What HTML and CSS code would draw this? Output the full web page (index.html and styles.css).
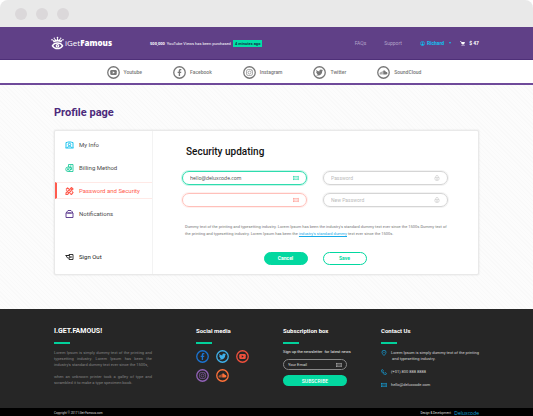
FILE: index.html
```html
<!DOCTYPE html>
<html lang="en">
<head>
<meta charset="utf-8">
<meta name="viewport" content="width=device-width, initial-scale=1">
<title>iGetFamous - Profile page</title>
<link rel="stylesheet" href="styles.css">
</head>
<body>
<svg class="sprite" aria-hidden="true">
  <symbol id="youtube" viewBox="0 0 26 26"><circle cx="13" cy="13" r="11.5" fill="none" stroke="currentColor" stroke-width="2.6"/><rect x="6.5" y="8" width="13" height="10" rx="2.5" fill="currentColor"/><path d="M11.5 10.5v5l4-2.5z" fill="var(--hole)"/></symbol>
  <symbol id="facebook" viewBox="0 0 26 26"><circle cx="13" cy="13" r="11.5" fill="none" stroke="currentColor" stroke-width="2.6"/><path d="M11.5 20v-6H9.300v-2.600h2.200V9.500c0-2.300 1.300-3.500 3.300-3.500h1.900v2.500h-1.300c-.9 0-1.200.5-1.200 1.200v1.700h2.500l-.4 2.600h-2.100v6z" fill="currentColor"/></symbol>
  <symbol id="instagram" viewBox="0 0 26 26"><circle cx="13" cy="13" r="11.500" fill="none" stroke="currentColor" stroke-width="2.6"/><g fill="none" stroke="currentColor" stroke-width="1.200"><rect x="7" y="7" width="12" height="12" rx="3.500"/><circle cx="13" cy="13" r="3"/></g><circle cx="16.500" cy="9.500" r=".9" fill="currentColor"/></symbol>
  <symbol id="twitter" viewBox="0 0 26 26"><circle cx="13" cy="13" r="11.5" fill="none" stroke="currentColor" stroke-width="2.6"/><path d="M20 8.800l-1.600 1.700c.2 4.800-3.400 8.700-8 8.700-1.700 0-3.200-.4-4.400-1.200 1.500.1 2.900-.3 4-1.200-1.300-.1-2.200-.9-2.600-2h1.200c-1.400-.5-2.200-1.600-2.200-3l1.300.3C6.400 11.100 6.100 9.500 6.900 8c1.500 1.800 3.500 2.800 5.900 3-.4-2.300 1-3.900 2.900-3.900.8 0 1.500.3 2.100.9l1.800-.7-1.100 1.600z" fill="currentColor"/></symbol>
  <symbol id="soundcloud" viewBox="0 0 26 26"><circle cx="13" cy="13" r="11.5" fill="none" stroke="currentColor" stroke-width="2.6"/><path d="M5.500 13.500h1V17h-1zM7.200 12.200h1V17h-1zM9 11.500h1V17H9zM10.700 10.500h1V17h-1zM12.400 9.500c2.500-1.400 5 .1 5.400 2.700 1.700-.4 3 .8 3 2.400 0 1.500-1 2.400-2.400 2.400h-6z" fill="currentColor"/></symbol>
  <symbol id="mail" viewBox="0 0 14 10"><rect x="1" y="1" width="12" height="8" fill="none" stroke="currentColor" stroke-width="1.400"/><path d="M1 1l6 5 6-5M1 9l4-4M13 9L9 5" fill="none" stroke="currentColor" stroke-width="1.200"/></symbol>
  <symbol id="lock" viewBox="0 0 14 14"><path d="M4 6V4a3 3 0 016 0v2M2 6h10v3a5 4 0 01-10 0zM7 8v3M5 9.500h4" fill="none" stroke="currentColor" stroke-width="1.300"/></symbol>
</svg>

<div class="window">
  <div class="chrome"><span></span><span></span><span></span></div>

  <header class="top wrap">
    <a class="logo" href="#">
      <svg viewBox="0 0 28 30" aria-hidden="true"><path d="M6 13L2 6l6 3-1-6 5 5 2-7 2 7 5-5-1 6 6-3-4 7c-5-3-11-3-16 0z" fill="#fff"/><g fill="#fff"><circle cx="14" cy="2" r="1.800"/><circle cx="7" cy="3.500" r="1.500"/><circle cx="21" cy="3.500" r="1.500"/><circle cx="2" cy="7" r="1.500"/><circle cx="26" cy="7" r="1.500"/></g><path d="M3 20c5-8 17-8 22 0-5 8-17 8-22 0z" fill="#604087" stroke="#fff" stroke-width="3"/><circle cx="14" cy="20" r="4" fill="#fff"/><circle cx="14" cy="20" r="1.500" fill="#604087"/></svg>
      <span>iGet<b>Famous</b></span>
    </a>
    <p class="ticker"><span><b>500,000</b>&nbsp; YouTube Views has been purchased</span><mark>4 minutes ago</mark></p>
    <nav class="account" aria-label="Account">
      <a href="#">FAQs</a>
      <a href="#">Support</a>
      <a class="user" href="#"><svg viewBox="0 0 12 12" aria-hidden="true"><circle cx="6" cy="6" r="5" fill="none" stroke="currentColor" stroke-width="1.500"/><circle cx="6" cy="4.500" r="1.800" fill="currentColor"/><path d="M3 9c1-3 5-3 6 0-2 2-4 2-6 0z" fill="currentColor"/></svg>Richard<i class="caret"></i></a>
      <a class="cart" href="#"><svg viewBox="0 0 12 12" aria-hidden="true"><path d="M0 1h2.500L5 7.500h5" fill="none" stroke="currentColor" stroke-width="1.500"/><path d="M3 2.500h9L10 7H4.500z" fill="currentColor"/><circle cx="5" cy="10" r="1.300" fill="currentColor"/><circle cx="9.500" cy="10" r="1.300" fill="currentColor"/></svg>$ 47</a>
    </nav>
  </header>

  <nav class="networks" aria-label="Networks">
    <a href="#"><svg class="round"><use href="#youtube"/></svg>Youtube</a>
    <a href="#"><svg class="round"><use href="#facebook"/></svg>Facebook</a>
    <a href="#"><svg class="round"><use href="#instagram"/></svg>Instagram</a>
    <a href="#"><svg class="round"><use href="#twitter"/></svg>Twitter</a>
    <a href="#"><svg class="round"><use href="#soundcloud"/></svg>SoundCloud</a>
  </nav>

  <main class="wrap">
    <h1>Profile page</h1>
    <div class="card">
      <nav class="side" aria-label="Profile">
        <a href="#"><svg class="c-cyan" viewBox="0 0 18 16" aria-hidden="true"><g fill="none" stroke="currentColor" stroke-width="2"><path d="M2 14V3h3M13 3h3v11M5 2h8"/><circle cx="9" cy="7" r="2.500"/><path d="M4.500 14c0-5 9-5 9 0M1 14h16"/></g></svg>My Info</a>
        <a href="#"><svg class="c-green" viewBox="0 0 18 16" aria-hidden="true"><g fill="none" stroke="currentColor" stroke-width="1.700"><path d="M7 6V1h9v14H7"/><circle cx="6" cy="10.500" r="4.500"/><path d="M13 4h-3v3h3v4h-3M6 8v5M4 10.500h4"/></g></svg>Billing Method</a>
        <a class="active" href="#" aria-current="page"><svg viewBox="0 0 18 16" aria-hidden="true"><g fill="none" stroke="currentColor" stroke-width="2.200"><path d="M2 12L13 1l3 3L5 15H2zM5 9l3 3M8 6l3 3M11 3l3 3"/><path d="M2 5l3-3 3 2M10 13l3 2 3-4-2-2M2 5l2 2"/></g></svg>Password and Security</a>
        <a href="#"><svg class="c-purple" viewBox="0 0 18 16" aria-hidden="true"><path d="M2 6h14v9H2zM2 6l4-5h6l3 3v2M5 6h8" fill="none" stroke="currentColor" stroke-width="1.800" stroke-linejoin="round"/></svg>Notifications</a>
        <a class="out" href="#"><svg viewBox="0 0 18 16" aria-hidden="true"><path d="M8 5V3h8v10H8v-2M9 5H2l3 5h5zM1 5h8M12 6v4" fill="none" stroke="currentColor" stroke-width="1.800"/></svg>Sign Out</a>
      </nav>
      <section class="content">
        <h2>Security updating</h2>
        <form>
          <div class="fields">
            <label class="field ok"><input type="email" aria-label="Email" value="hello@deluxcode.com"><svg><use href="#mail"/></svg></label>
            <label class="field"><input type="password" aria-label="Password" placeholder="Password"><svg><use href="#lock"/></svg></label>
            <label class="field bad"><input type="email" aria-label="Confirm email"><svg><use href="#mail"/></svg></label>
            <label class="field"><input type="password" aria-label="New Password" placeholder="New Password"><svg><use href="#lock"/></svg></label>
          </div>
          <p class="note">Dummy text of the printing and typesetting industry. Lorem Ipsum has been the industry's standard dummy text ever since the 1500s.Dummy text of the printing and typesetting industry. Lorem Ipsum has been the <a href="#">industry's standard dummy</a> text ever since the 1500s.</p>
          <div class="actions"><button class="fill" type="button">Cancel</button><button type="submit">Save</button></div>
        </form>
      </section>
    </div>
  </main>

  <footer>
    <div class="columns wrap">
      <section class="about">
        <h3>I.GET.FAMOUS!</h3>
        <p>Lorem Ipsum is simply dummy text of the printing and typesetting industry. Lorem Ipsum has been the industry's standard dummy text ever since the 1500s,</p>
        <p>when an unknown printer took a galley of type and scrambled it to make a type specimen book.</p>
      </section>
      <section class="social">
        <h3>Social media</h3>
        <div class="icons">
          <a class="fb" href="#" aria-label="Facebook"><svg class="round"><use href="#facebook"/></svg></a>
          <a class="tw" href="#" aria-label="Twitter"><svg class="round"><use href="#twitter"/></svg></a>
          <a class="yt" href="#" aria-label="Youtube"><svg class="round"><use href="#youtube"/></svg></a>
          <a class="ig" href="#" aria-label="Instagram"><svg class="round"><use href="#instagram"/></svg></a>
          <a class="sc" href="#" aria-label="SoundCloud"><svg class="round"><use href="#soundcloud"/></svg></a>
        </div>
      </section>
      <form class="subscribe">
        <h3>Subscription box</h3>
        <label for="news">Sign up the newsletter &nbsp;for latest news</label>
        <div class="field"><input id="news" type="email" placeholder="Your Email"><svg><use href="#mail"/></svg></div>
        <button type="submit">SUBSCRIBE</button>
      </form>
      <section class="contact">
        <h3>Contact Us</h3>
        <ul>
          <li><svg viewBox="0 0 12 12" aria-hidden="true"><path d="M6 11C3 8 2 6 2 4.500a4 4 0 018 0C10 6 9 8 6 11z" fill="none" stroke="currentColor" stroke-width="1.500"/><circle cx="6" cy="4.500" r="1.200" fill="currentColor"/></svg><span>Lorem Ipsum is simply dummy text of the printing<br>&nbsp;and typesetting industry.</span></li>
          <li><svg viewBox="0 0 12 12" aria-hidden="true"><path d="M1 2l2-1 2 3-1.500 1.500 3 3L8 7l3 2-1 2C6 12 0 6 1 2z" fill="none" stroke="currentColor" stroke-width="1.400"/></svg><span>(+01) 800 888 8888</span></li>
          <li><svg><use href="#mail"/></svg><span>hello@deluxcode.com</span></li>
        </ul>
      </section>
    </div>
    <div class="legal wrap"><span>Copyright © 2017 I.Get-Famous.com</span><span class="credit">Design &amp; Development: <b>Deluxcode</b></span></div>
  </footer>
</div>
</body>
</html>
```
FILE: styles.css
```css
* { box-sizing: border-box; margin: 0; padding: 0; }
body { font: 5px/7px Roboto, "Liberation Sans", sans-serif; background: #fff; color: #555; }
a { color: inherit; text-decoration: none; }
ul { list-style: none; }
button, input { font: inherit; color: inherit; border: 0; background: none; outline: 0; }
button { cursor: pointer; }
svg { flex: none; }
.sprite { position: absolute; width: 0; height: 0; }
.wrap { padding-left: 54px; padding-right: 54px; }
.round { display: block; width: 13px; height: 13px; --hole: #fff; }

.window { min-height: 100vh; display: flex; flex-direction: column; border-radius: 8px 8px 0 0; overflow: hidden;
  background: repeating-linear-gradient(45deg, #fcfcfc 0 2px, #f9f9f9 2px 3px); }
.chrome { display: flex; gap: 9px; padding: 8px 15px 7px; background: #e9e9e9; }
.chrome span { width: 12px; height: 12px; border-radius: 50%; background: #dbd8da; }

.top { display: flex; align-items: center; height: 33px; background: #604087; border-bottom: 1px solid #4e2f78; color: #fff; padding-left: 51px; }
.logo { display: flex; align-items: center; gap: 1px; font: 400 8px/12px "Open Sans", sans-serif; }
.logo svg { width: 13px; height: 15px; }
.logo b { font-weight: 800; }
.ticker { display: flex; align-items: center; gap: 2px; margin-left: 38px; font-size: 4px; }
.ticker span { white-space: nowrap; }
.ticker mark { padding: 0 2px; background: #02e0a6; color: #14304a; font-weight: 700; white-space: nowrap; }
.account { display: flex; align-items: center; gap: 18px; margin-left: auto; color: #b3a2c8; }
.account a { display: flex; align-items: center; white-space: nowrap; }
.account svg { width: 5px; height: 5px; margin-right: 2px; }
.account .user { color: #10c1f0; font-weight: 700; }
.caret { border: 1px solid transparent; border-top: 2px solid; border-bottom: 0; margin-left: 5px; }
.account .cart { color: #fff; font-weight: 700; margin-left: -9px; }
.account .cart svg { margin-right: 4px; }

.networks { display: flex; justify-content: center; gap: 31px; padding: 6px 5px 4px 0; background: #fff; border-bottom: 2px solid #6f4a9a; color: #777; font-weight: 500; }
.networks a { display: flex; align-items: center; gap: 4px; }

main { flex: 1; padding-top: 21px; padding-bottom: 34px; }
h1 { font-size: 11px; line-height: 14px; font-weight: 700; color: #4c2a7b; margin-bottom: 10px; }
.card { display: grid; grid-template-columns: 98px 1fr; background: #fff; border: 1px solid #e9e9e9; border-radius: 2px; box-shadow: 0 0 2px #ddd; }
.side { display: flex; flex-direction: column; gap: 6px; padding: 5px 0 9px; border-right: 1px solid #f3f3f3; font-size: 6px; color: #4c4c4c; }
.side a { display: flex; align-items: center; gap: 5px; height: 17px; padding-left: 8px; border: solid transparent; border-width: 1px 0 1px 2px; white-space: nowrap; }
.side svg { width: 9px; height: 8px; }
.side .active { color: #ff5a4d; border-color: #ffe9e6; border-left-color: #ff5a4d; }
.side .out { margin-top: auto; color: #222; }
.c-cyan { color: #1cc3ee; } .c-green { color: #17c998; } .c-purple { color: #543089; }

.content { padding: 14px 30px 9px 29px; }
h2 { font-size: 10px; line-height: 13px; font-weight: 500; color: #111; padding-left: 4px; margin-bottom: 13px; }
.fields { display: grid; grid-template-columns: 1fr 1fr; gap: 8px 16px; }
.field { display: flex; align-items: center; height: 14px; padding: 0 7px; border: 1px solid #d5d5d5; border-radius: 7px; color: #c4c4c4; box-shadow: 0 0 0 1px #f3f3f3; }
.field input { flex: 1; min-width: 0; height: 100%; }
.field input::placeholder { color: #bbb; opacity: 1; }
.field svg { width: 6px; height: 6px; }
.field.ok { border-color: #2fdcae; box-shadow: 0 0 0 1px #c5f5e8; color: #2fdcae; }
.ok input { color: #444; font-family: "Open Sans", sans-serif; }
.field.bad { border-color: #ffc0ba; box-shadow: 0 0 0 1px #fff0ee; color: #ff9d94; }
.note { margin: 16px 0 15px; padding-left: 3px; font-size: 4px; color: #777; }
.note a { color: #16a9e8; text-decoration: underline; }
.actions { display: flex; justify-content: center; gap: 15px; }
.actions button { width: 44px; height: 13px; border: 1px solid #02d8a0; border-radius: 7px; color: #02d8a0; font-weight: 700; }
.actions .fill { background: #02d8a0; color: #fff; }

footer { background: #262626; color: #d5d5d5; font-size: 4px; line-height: 6px; }
.columns { display: grid; grid-template-columns: 1fr 53px 64px 98px; gap: 34px; padding-top: 18px; padding-bottom: 20px; }
h3 { font-size: 6px; line-height: 8px; font-weight: 700; color: #fff; white-space: nowrap; margin-bottom: 6px; }
h3::after { content: ""; display: block; width: 16px; height: 2px; margin-top: 7px; background: #02d09b; }
.about { padding-right: 10px; }
.about h3 { font-size: 7px; }
.about p { text-align: justify; color: #858585; margin-bottom: 6px; }
.about p:last-child { margin-bottom: 0; }
.icons { display: grid; grid-template-columns: repeat(3, 13px); gap: 6px 7px; }
.icons .round { --hole: #262626; }
.fb { color: #1b74d2; } .tw { color: #3fb0ea; } .yt { color: #f0503c; } .ig { color: #9262b8; } .sc { color: #ff7139; }
.subscribe label { display: block; line-height: 4px; margin-bottom: 5px; white-space: nowrap; color: #eee; }
.subscribe .field { height: 11px; padding: 0 4px; border-color: #888; box-shadow: none; color: #aaa; margin-bottom: 5px; }
.subscribe .field input::placeholder { color: #ddd; }
.subscribe button { display: block; width: 100%; height: 11px; border-radius: 6px; background: #02d8a0; color: #fff; font-size: 5px; font-weight: 500; }
.contact ul { display: grid; gap: 7px; }
.contact li { display: flex; gap: 4px; white-space: nowrap; }
.contact svg { width: 6px; height: 6px; color: #159fd8; }
.legal { display: flex; justify-content: space-between; align-items: center; height: 10px; background: #000; color: #ddd; font-size: 3px; }
.credit { display: flex; align-items: center; gap: 3px; }
.credit b { font: 400 5px/7px "Open Sans", sans-serif; color: #12a5dc; }
```
